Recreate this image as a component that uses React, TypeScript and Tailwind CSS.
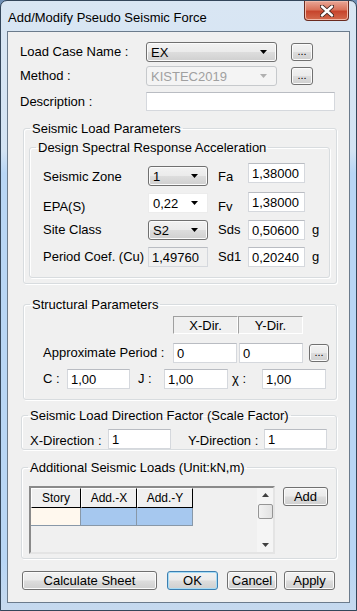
import React from 'react';

const FONT = "font-['Liberation_Sans',Arial,sans-serif]";

function Arrow({ color = '#000' }: { color?: string }) {
  return (
    <svg width="7" height="4" viewBox="0 0 7 4" className="shrink-0">
      <path d="M0 0h7L3.5 4z" fill={color} />
    </svg>
  );
}

function Btn({ label, className = '', isDefault = false }: { label: string; className?: string; isDefault?: boolean }) {
  return (
    <div
      className={`flex items-center justify-center rounded-[3px] border bg-[linear-gradient(#f2f2f2_0%,#ebebeb_48%,#dddddd_52%,#cfcfcf_100%)] text-[13px] leading-none text-black ${
        isDefault
          ? 'border-[#3c7fb1] shadow-[inset_0_0_0_1px_#a7dcf6]'
          : 'border-[#707070] shadow-[inset_0_0_0_1px_#fbfbfb]'
      } ${className}`}
    >
      {label}
    </div>
  );
}

function DotsBtn({ className = '' }: { className?: string }) {
  return (
    <div
      className={`flex items-end justify-center rounded-[3px] border border-[#707070] bg-[linear-gradient(#f2f2f2_0%,#ebebeb_48%,#dddddd_52%,#cfcfcf_100%)] pb-[3px] text-[11px] leading-none shadow-[inset_0_0_0_1px_#fbfbfb] ${className}`}
    >
      ...
    </div>
  );
}

function Combo({ value, w, kind = 'button' }: { value: string; w: string; kind?: 'button' | 'disabled' | 'flat' }) {
  const box =
    kind === 'button'
      ? 'rounded-[3px] border border-[#707070] bg-[linear-gradient(#f2f2f2_0%,#ebebeb_48%,#dddddd_52%,#cfcfcf_100%)] shadow-[inset_0_0_0_1px_#fbfbfb] text-black'
      : kind === 'disabled'
        ? 'rounded-[3px] border border-[#c6c9cc] bg-[#f4f4f4] text-[#a0a0a0]'
        : 'border border-[#ececec] bg-white text-black';
  return (
    <div className={`flex h-[20px] items-center justify-between pl-[4px] pr-[9px] text-[13px] leading-none ${box} ${w}`}>
      <span>{value}</span>
      <Arrow color={kind === 'disabled' ? '#b0b0b0' : '#000'} />
    </div>
  );
}

function TextBox({ value = '', w, h = 'h-[20px]', readOnly = false }: { value?: string; w: string; h?: string; readOnly?: boolean }) {
  return (
    <div
      className={`flex items-start border border-[#d5d8dd] border-t-[#b9bcc2] pl-[3px] pt-[3px] text-[13px] leading-[13px] text-black ${
        readOnly ? 'bg-[#f0f0f0]' : 'bg-white'
      } ${w} ${h}`}
    >
      {value}
    </div>
  );
}

function Group({ title, className = '', children }: { title: string; className?: string; children: React.ReactNode }) {
  return (
    <fieldset className={`rounded-[3px] border border-[#d8dcdf] shadow-[inset_1px_1px_0_#ffffff,1px_1px_0_#ffffff] ${className}`}>
      <legend className="ml-[6px] px-[2px] text-[13px] leading-[15px] text-black">{title}</legend>
      {children}
    </fieldset>
  );
}

function HeadCell({ label, w }: { label: string; w: string }) {
  return (
    <div className={`flex h-[18px] items-center justify-center border border-[#a0a0a0] border-r-white border-b-white bg-[#f0f0f0] text-[13px] leading-none ${w}`}>
      {label}
    </div>
  );
}

export default function App() {
  return (
    <div className={`h-[611px] w-[357px] overflow-hidden bg-[#6f8fb5] ${FONT}`}>
      <div className="flex h-full w-full flex-col rounded-t-[7px] border border-[#34465a] bg-[linear-gradient(180deg,#d9e6f3_0px,#d3e3f3_150px,#b8d6f5_172px,#b8d6f5_560px,#c6d9ee_100%)]">
        {/* Title bar */}
        <div className="flex h-[30px] items-start">
          <div className="ml-[7px] mt-[9px] text-[13px] leading-[15px] text-black">Add/Modify Pseudo Seismic Force</div>
          <div className="ml-auto mr-[7px] flex h-[20px] w-[45px] items-center justify-center rounded-b-[4px] border border-t-0 border-[#6a2b20] bg-[linear-gradient(#e9a797_0%,#d9735b_45%,#c7452d_55%,#d36a4d_100%)] shadow-[inset_0_0_0_1px_#f0b8a8]">
            <svg width="14" height="12" viewBox="0 0 14 12">
              <path d="M2 1.5l10 9M12 1.5l-10 9" stroke="#3b2420" strokeWidth="4.2" strokeLinecap="round" />
              <path d="M2 1.5l10 9M12 1.5l-10 9" stroke="#ffffff" strokeWidth="2.4" strokeLinecap="round" />
            </svg>
          </div>
        </div>

        {/* Client area */}
        <div className="mx-[6px] flex h-[572px] flex-col border border-[#6b7b8c] bg-[#f0f0f0] text-[13px] text-black">
          {/* Top fields */}
          <div className="mt-[10px] flex h-[20px] items-center pl-[12px]">
            <span className="w-[126px]">Load Case Name :</span>
            <Combo value="EX" w="w-[131px]" />
            <DotsBtn className="ml-[14px] h-[18px] w-[22px]" />
          </div>
          <div className="mt-[4px] flex h-[20px] items-center pl-[12px]">
            <span className="w-[126px]">Method :</span>
            <Combo value="KISTEC2019" w="w-[131px]" kind="disabled" />
            <DotsBtn className="ml-[14px] h-[18px] w-[22px]" />
          </div>
          <div className="mt-[6px] flex h-[19px] items-center pl-[12px]">
            <span className="w-[126px]">Description :</span>
            <TextBox w="w-[189px]" h="h-[19px]" />
          </div>

          {/* Seismic Load Parameters */}
          <Group title="Seismic Load Parameters" className="ml-[15px] mt-[10px] w-[314px]">
            <Group title="Design Spectral Response Acceleration" className="mb-[5px] ml-[5px] mt-[4px] w-[301px]">
              <div className="flex flex-col gap-[4px] pb-[10px] pl-[13px] pt-[8px]">
                <div className="flex h-[23px] items-start">
                  <span className="mt-[4px] w-[105px]">Seismic Zone</span>
                  <div className="mt-[3px]">
                    <Combo value="1" w="w-[60px]" />
                  </div>
                  <span className="ml-[10px] mt-[4px] w-[30px]">Fa</span>
                  <TextBox value="1,38000" w="w-[57px]" />
                </div>
                <div className="mt-[2px] flex h-[21px] items-start">
                  <span className="mt-[5px] w-[105px]">EPA(S)</span>
                  <div className="mt-[1px]">
                    <Combo value="0,22" w="w-[60px]" kind="flat" />
                  </div>
                  <span className="ml-[10px] mt-[5px] w-[30px]">Fv</span>
                  <TextBox value="1,38000" w="w-[57px]" />
                </div>
                <div className="mt-[3px] flex h-[20px] items-center">
                  <span className="w-[105px]">Site Class</span>
                  <Combo value="S2" w="w-[60px]" />
                  <span className="ml-[10px] w-[30px]">Sds</span>
                  <TextBox value="0,50600" w="w-[57px]" />
                  <span className="ml-[7px]">g</span>
                </div>
                <div className="mt-[3px] flex h-[20px] items-center">
                  <span className="w-[105px]">Period Coef. (Cu)</span>
                  <TextBox value="1,49760" w="w-[60px]" readOnly />
                  <span className="ml-[10px] w-[30px]">Sd1</span>
                  <TextBox value="0,20240" w="w-[57px]" />
                  <span className="ml-[7px]">g</span>
                </div>
              </div>
            </Group>
          </Group>

          {/* Structural Parameters */}
          <Group title="Structural Parameters" className="ml-[15px] mt-[13px] w-[314px]">
            <div className="flex flex-col pb-[10px] pt-[4px]">
              <div className="flex pl-[149px]">
                <HeadCell label="X-Dir." w="w-[65px]" />
                <HeadCell label="Y-Dir." w="w-[65px]" />
              </div>
              <div className="mt-[9px] flex h-[20px] items-center pl-[19px]">
                <span className="w-[130px]">Approximate Period :</span>
                <TextBox value="0" w="w-[64px]" />
                <TextBox value="0" w="ml-[2px] w-[64px]" />
                <DotsBtn className="ml-[6px] h-[18px] w-[20px]" />
              </div>
              <div className="mt-[6px] flex h-[20px] items-center pl-[19px]">
                <span className="w-[24px]">C :</span>
                <TextBox value="1,00" w="w-[63px]" />
                <span className="ml-[8px] w-[26px]">J :</span>
                <TextBox value="1,00" w="w-[64px]" />
                <span className="ml-[2px] w-[32px] pl-[2px]">χ :</span>
                <TextBox value="1,00" w="w-[64px]" />
              </div>
            </div>
          </Group>

          {/* Direction factor */}
          <Group title="Seismic Load Direction Factor (Scale Factor)" className="ml-[13px] mt-[8px] w-[316px]">
            <div className="flex h-[26px] items-start pb-[5px] pl-[8px] pt-[6px]">
              <span className="mt-[2px] w-[78px]">X-Direction :</span>
              <TextBox value="1" w="w-[63px]" />
              <span className="ml-[17px] mt-[2px] w-[76px]">Y-Direction :</span>
              <TextBox value="1" w="w-[63px]" />
            </div>
          </Group>

          {/* Additional loads */}
          <Group title="Additional Seismic Loads (Unit:kN,m)" className="ml-[13px] mt-[10px] w-[316px]">
            <div className="flex items-start pb-[4px] pl-[7px] pt-[11px]">
              <div className="flex h-[68px] w-[246px] border-2 border-[#8a8a8a] border-r-[#e4e4e4] border-b-[#e4e4e4] bg-[#f0f0f0]">
                <div className="flex flex-1 flex-col">
                  <div className="flex">
                    {[
                      ['Story', 'w-[50px]'],
                      ['Add.-X', 'w-[56px]'],
                      ['Add.-Y', 'w-[56px]'],
                    ].map(([l, w]) => (
                      <div
                        key={l}
                        className={`flex h-[20px] items-center justify-center border border-white border-r-black border-b-black bg-[#f0f0f0] text-[12px] leading-none ${w}`}
                      >
                        {l}
                      </div>
                    ))}
                  </div>
                  <div className="flex h-[18px]">
                    <div className="w-[50px] border-b border-r border-[#8898a8] bg-[#fff8ee]" />
                    <div className="w-[56px] border-b border-r border-[#8898a8] bg-[#a6c8ef]" />
                    <div className="w-[56px] border-b border-r border-[#8898a8] bg-[#a6c8ef]" />
                  </div>
                </div>
                <div className="flex w-[16px] flex-col items-center bg-[#f5f5f5]">
                  <div className="flex h-[14px] items-center justify-center">
                    <svg width="7" height="4" viewBox="0 0 7 4"><path d="M3.5 0L7 4H0z" fill="#404040" /></svg>
                  </div>
                  <div className="mt-[2px] h-[15px] w-[15px] rounded-[2px] border border-[#959595] bg-[linear-gradient(90deg,#f2f2f2,#e2e2e2)]" />
                  <div className="mt-auto flex h-[14px] items-center justify-center">
                    <svg width="7" height="4" viewBox="0 0 7 4"><path d="M0 0h7L3.5 4z" fill="#404040" /></svg>
                  </div>
                </div>
              </div>
              <Btn label="Add" className="ml-[8px] mt-[1px] h-[19px] w-[45px]" />
            </div>
          </Group>

          {/* Bottom buttons */}
          <div className="mt-[12px] flex items-center pl-[14px]">
            <Btn label="Calculate Sheet" className="h-[19px] w-[135px]" />
            <Btn label="OK" className="ml-[10px] h-[19px] w-[51px]" isDefault />
            <Btn label="Cancel" className="ml-[9px] h-[19px] w-[50px]" />
            <Btn label="Apply" className="ml-[7px] h-[19px] w-[51px]" />
          </div>
        </div>
      </div>
    </div>
  );
}
